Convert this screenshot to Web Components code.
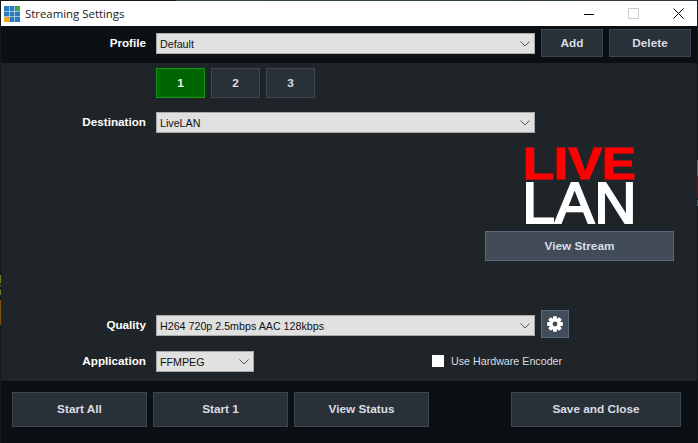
<!DOCTYPE html>
<html><head><meta charset="utf-8"><style>
html,body{margin:0;padding:0;background:#0b1014;overflow:hidden}
body{width:698px;height:443px;font-family:"Liberation Sans",Arial,sans-serif}
</style></head><body>
<template id="t-window"><style>
:host{display:flex;flex-direction:column;width:698px;height:443px;box-sizing:border-box;padding:1px 1px 0 1px;background:linear-gradient(90deg,#14181b 175px,#36464c 176px,#2c3a40 698px) top/100% 1px no-repeat,#14181b;position:relative}
.edge{position:absolute;left:0;width:1px}
.a{top:275px;height:20px;background:linear-gradient(#77771f 0 8px,#22261c 8px 10px,#77771f 10px 11px,#22261c 11px 15px,#77771f 15px)}
.b{top:300px;height:25px;background:#80560f}
.c{left:697px;top:160px;height:46px;background:linear-gradient(#5e6264 0 16px,#561a28 16px 38px,#1c2024 38px 40px,#46545c 40px)}
</style><span class="edge a"></span><span class="edge b"></span><span class="edge c"></span><slot></slot></template>

<template id="t-title"><style>
:host{display:flex;align-items:center;height:25px;background:#fff;color:#1a1a1a;font:11.4px "Open Sans","Noto Sans",sans-serif;flex:none}
svg{display:block;flex:none}
.ic{margin:0 5px 0 3px}
.t{flex:1}
.cap{display:flex}
.cap span{display:flex;justify-content:center;align-items:center;width:45px;height:25px}
.cap{margin-right:-4px}
</style>
<svg class="ic" width="16" height="16" viewBox="0 0 16 16">
<g fill="#2a7cc0"><rect width="5" height="5"/><rect x="5.5" width="5" height="5"/>
<rect y="5.5" width="5" height="5"/><rect x="5.5" y="5.5" width="5" height="5"/><rect x="11" y="5.5" width="5" height="5"/>
<rect x="5.5" y="11" width="5" height="5"/><rect x="11" y="11" width="5" height="5"/></g>
<rect x="11" width="5" height="5" fill="#3fa648"/><rect y="11" width="5" height="5" fill="#f5a41c"/></svg>
<span class="t"><slot></slot></span>
<span class="cap">
<span><svg width="10" height="10"><path d="M0 5.5H10" stroke="#000"/></svg></span>
<span><svg width="11" height="11"><rect x=".5" y=".5" width="10" height="10" fill="none" stroke="#ccc"/></svg></span>
<span><svg width="11" height="11"><path d="M.5 .5L10.5 10.5M10.5 .5L.5 10.5" stroke="#000" fill="none"/></svg></span>
</span></template>

<template id="t-row"><style>
:host{display:flex;align-items:center;flex:none}
.l{width:145px;text-align:right;margin-right:10px;font-weight:700;font-size:11.7px;color:#fff;flex:none;padding:var(--lt,0) 0 var(--lb,0)}
</style><span class="l"></span><slot></slot></template>

<template id="t-select"><style>
:host{display:flex;align-items:center;box-sizing:border-box;height:21px;background:#e0e0e0;border:1px solid #a8a8a8;padding:0 4px 0 3px;color:#111;font-size:10.7px;flex:none}
span{flex:1}
svg{display:block}
</style><span><slot></slot></span>
<svg width="10" height="6" viewBox="0 0 10 6"><path d="M.5 .5L5 5L9.5 .5" fill="none" stroke="#555"/></svg></template>

<template id="t-btn"><style>
:host{display:flex;align-items:center;justify-content:center;box-sizing:border-box;background:#2a3038;border:1px solid #3d4650;color:#d8dee4;font-weight:700;font-size:11.8px;flex:none}
:host([kind=on]){background:#006400;border-color:#0f9a0f;color:#e8f4e8}
:host([kind=light]){background:#424c58;border-color:#5c6b7c;color:#d4dfea}
</style><slot></slot></template>

<template id="t-gear"><style>
:host{display:flex;align-items:center;justify-content:center;box-sizing:border-box;width:28px;height:28px;background:#424c58;border:1px solid #5c6b7c;flex:none}
svg{display:block}
</style><svg width="16" height="16" viewBox="-8 -8 16 16"><path fill="#fff" fill-rule="evenodd"/></svg></template>

<template id="t-logo"><style>
:host{display:flex;flex-direction:column;align-items:center;width:111px;flex:none;font-family:"Liberation Sans",Arial,sans-serif}
span{display:block;white-space:nowrap}
.live{color:#f00;font-weight:700;font-size:45px;line-height:33px;height:33px;transform:scaleX(1.13);-webkit-text-stroke:1px #f00}
.lan{color:#fff;font-size:57px;line-height:42px;height:42px;margin-top:2px;transform:scaleX(1.03);-webkit-text-stroke:2px #fff}
</style><span class="live">LIVE</span><span class="lan">LAN</span></template>

<template id="t-check"><style>
:host{display:flex;align-items:center;color:#d8dee4;font-size:10.7px;flex:none;padding-bottom:1px}
i{display:block;width:12px;height:12px;background:#fff;margin-right:7px}
</style><i></i><slot></slot></template>

<app-window>
<title-bar>Streaming Settings</title-bar>
<div style="flex:none;height:37px;background:#0b1014;display:flex;flex-direction:column;padding-top:3px;box-sizing:border-box">
<form-row label="Profile" style="--lb:2px"><drop-down style="width:379px;margin-top:1px">Default</drop-down>
<ui-btn style="width:62px;height:28px;margin-left:6px">Add</ui-btn>
<ui-btn style="width:82px;height:28px;margin-left:6px">Delete</ui-btn></form-row>
</div>
<div style="flex:1;background:#1f2428;display:flex;flex-direction:column;padding-top:5px">
<form-row label=""><ui-btn kind="on" style="width:49px;height:30px">1</ui-btn>
<ui-btn style="width:49px;height:30px;margin-left:6px">2</ui-btn>
<ui-btn style="width:49px;height:30px;margin-left:6px">3</ui-btn></form-row>
<form-row label="Destination" style="margin-top:14px;--lb:3px"><drop-down style="width:379px">LiveLAN</drop-down></form-row>
<div style="margin:14px 0 0 484px;width:189px;display:flex;flex-direction:column;align-items:center">
<live-logo></live-logo>
<ui-btn kind="light" style="width:189px;height:30px;margin-top:7px">View Stream</ui-btn>
</div>
<form-row label="Quality" style="margin-top:49px"><drop-down style="width:379px;margin-top:3px">H264 720p 2.5mbps AAC 128kbps</drop-down><gear-btn style="margin-left:6px"></gear-btn></form-row>
<form-row label="Application" style="margin-top:13px;--lb:3px"><drop-down style="width:98px">FFMPEG</drop-down><check-box style="margin-left:178px">Use Hardware Encoder</check-box></form-row>
</div>
<div style="flex:none;height:62px;background:#0b1014;display:flex;align-items:flex-start;padding:11px 16px 0 11px;box-sizing:border-box">
<ui-btn style="width:135px;height:35px;padding-bottom:2px">Start All</ui-btn>
<ui-btn style="width:135px;height:35px;margin-left:6px;padding-bottom:2px">Start 1</ui-btn>
<ui-btn style="width:135px;height:35px;margin-left:6px;padding-bottom:2px">View Status</ui-btn>
<ui-btn style="width:170px;height:35px;margin-left:auto;padding-bottom:2px">Save and Close</ui-btn>
</div>
</app-window>

<script>
function reg(tag,tid,init){customElements.define(tag,class extends HTMLElement{
constructor(){super();const r=this.attachShadow({mode:"open"});r.appendChild(document.getElementById(tid).content.cloneNode(true));if(init)init(r,this);}
connectedCallback(){if(tag==="form-row")this.shadowRoot.querySelector(".l").textContent=this.getAttribute("label")||"";}
});}
reg("app-window","t-window");reg("title-bar","t-title");reg("form-row","t-row");reg("drop-down","t-select");reg("ui-btn","t-btn");reg("live-logo","t-logo");reg("check-box","t-check");
reg("gear-btn","t-gear",r=>{
let d="";const n=8,R=8,Rr=5.8;
for(let i=0;i<n;i++){const a=i*2*Math.PI/n,w=.24,w2=.36;
const p=[[Rr,a-w2],[R,a-w],[R,a+w],[Rr,a+w2]];
p.forEach((q,j)=>{d+=(i||j?"L":"M")+(q[0]*Math.cos(q[1])).toFixed(2)+" "+(q[0]*Math.sin(q[1])).toFixed(2);});}
d+="ZM2.4 0A2.4 2.4 0 1 0 -2.4 0A2.4 2.4 0 1 0 2.4 0Z";
r.querySelector("path").setAttribute("d",d);
});
</script>
</body></html>
